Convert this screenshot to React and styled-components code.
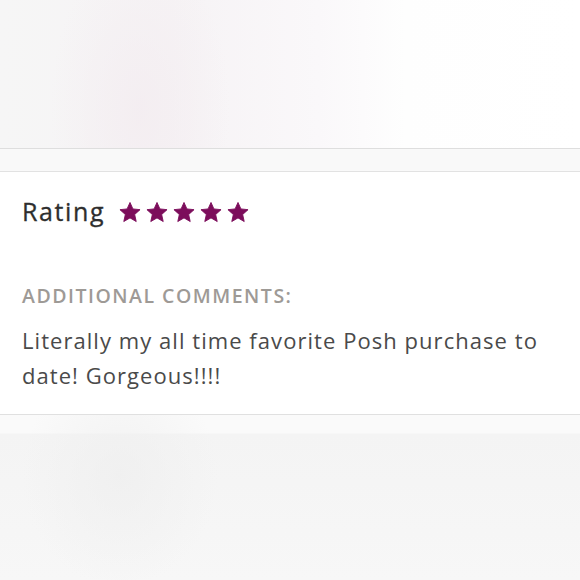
import React from 'react';
import styled, { createGlobalStyle } from 'styled-components';

const GlobalStyle = createGlobalStyle`
  html, body {
    margin: 0;
    padding: 0;
    background: #f7f7f7;
    font-family: 'Open Sans', 'Lato', sans-serif;
  }
`;

const Page = styled.div`
  width: 580px;
  height: 580px;
  display: flex;
  flex-direction: column;
  overflow: hidden;
`;

const Hero = styled.div`
  height: 148px;
  flex-shrink: 0;
  background:
    radial-gradient(ellipse 120px 220px at 140px 110px, rgba(243, 236, 240, 0.8), rgba(255, 255, 255, 0) 75%),
    linear-gradient(90deg, #f6f6f6 0%, #f6f3f5 30%, #faf8fa 55%, #fefefe 70%, #ffffff 100%);
  border-bottom: 1px solid #dedede;
`;

const Spacer = styled.div`
  height: 22px;
  flex-shrink: 0;
  background: #f9f9f9;
  border-bottom: 1px solid #e2e2e2;
`;

const Card = styled.section`
  background: #ffffff;
  padding: 22px 22px 0;
  height: 220px;
  flex-shrink: 0;
  border-bottom: 1px solid #e0e0e0;
`;

const RatingRow = styled.div`
  display: flex;
  align-items: center;
  gap: 14px;
`;

const RatingLabel = styled.span`
  font-size: 25px;
  font-weight: 500;
  color: #2e2e2e;
  letter-spacing: 1.6px;
  -webkit-text-stroke: 0.3px #2e2e2e;
`;

const Stars = styled.div`
  display: flex;
  gap: 5px;
  padding-top: 3px;
`;

const CommentsLabel = styled.div`
  margin-top: 54px;
  font-size: 19.5px;
  font-weight: 600;
  color: #9e9a96;
  letter-spacing: 1.5px;
  text-transform: uppercase;
`;

const CommentText = styled.p`
  margin: 14px 0 0;
  font-size: 22px;
  line-height: 35px;
  color: #4a4a4a;
  letter-spacing: 1.05px;
`;

const Footer = styled.div`
  flex: 1;
  background:
    radial-gradient(ellipse 140px 160px at 120px 60px, rgba(238, 238, 238, 0.7), rgba(255, 255, 255, 0) 70%),
    linear-gradient(180deg, #fafafa 0px, #fafafa 18px, #f4f4f4 19px, #f7f7f7 100%);
`;

const Star = () => (
  <svg width="22" height="21" viewBox="0 0 24 23">
    <path
      d="M12 0.5l3.2 7.1 7.8 0.8-5.9 5.3 1.7 7.7L12 17.4l-6.8 4 1.7-7.7L1 8.4l7.8-0.8z"
      fill="#7c0d5b"
      stroke="#7c0d5b"
      strokeWidth="1"
      strokeLinejoin="round"
    />
  </svg>
);

export default function App() {
  return (
    <>
      <GlobalStyle />
      <Page>
        <Hero />
        <Spacer />
        <Card>
          <RatingRow>
            <RatingLabel>Rating</RatingLabel>
            <Stars>
              {[0, 1, 2, 3, 4].map((i) => (
                <Star key={i} />
              ))}
            </Stars>
          </RatingRow>
          <CommentsLabel>Additional Comments:</CommentsLabel>
          <CommentText>
            Literally my all time favorite Posh purchase to date! Gorgeous!!!!
          </CommentText>
        </Card>
        <Footer />
      </Page>
    </>
  );
}
